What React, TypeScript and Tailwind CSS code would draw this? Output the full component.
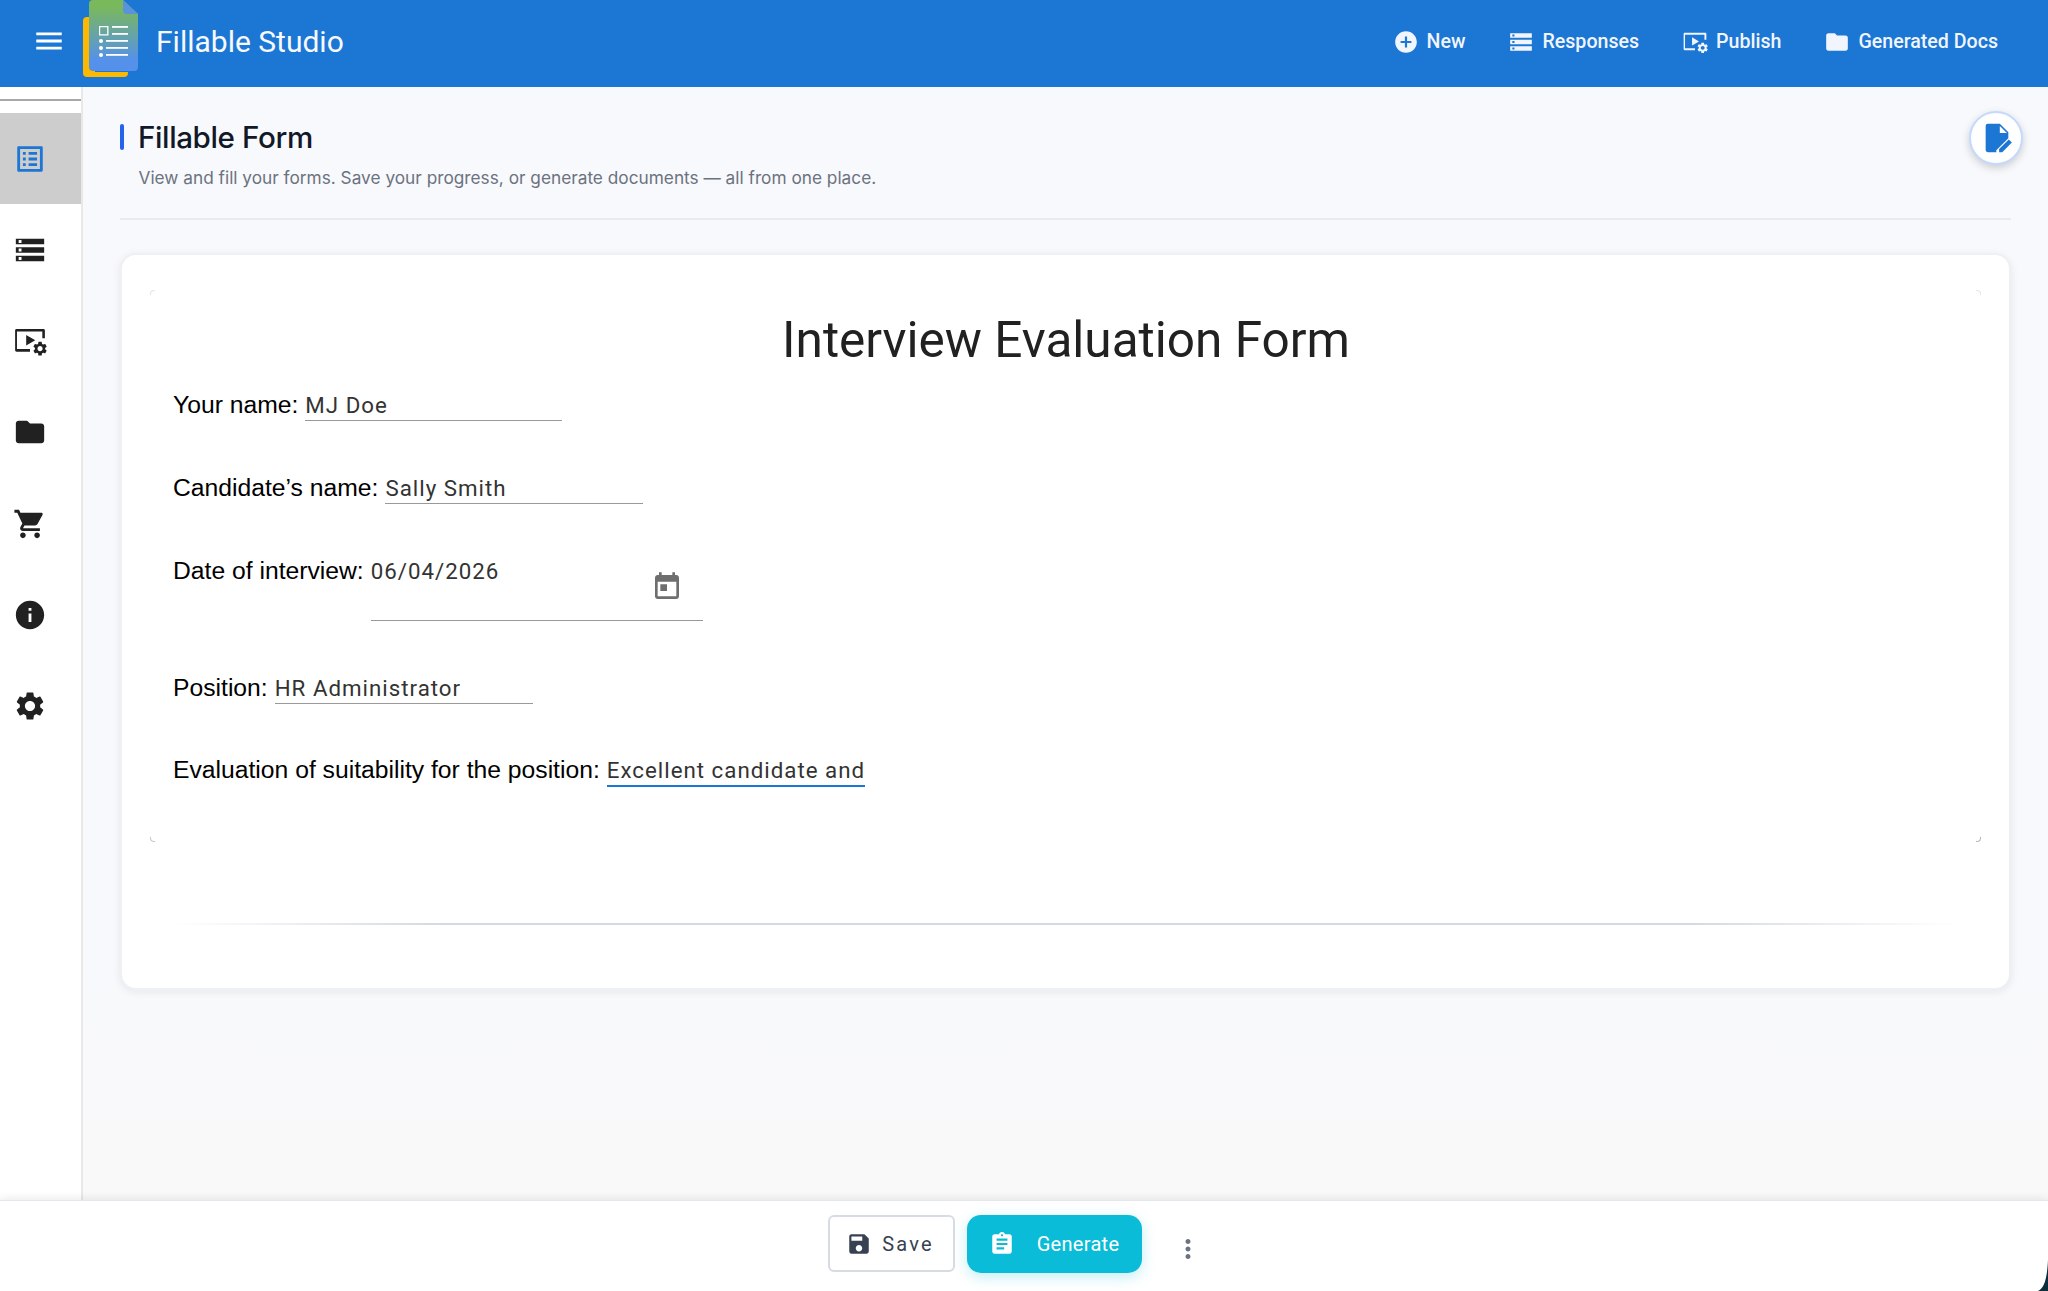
import type { ReactNode } from 'react';

const paths = {
	menu: 'M3 18h18v-2H3v2zm0-5h18v-2H3v2zm0-7v2h18V6H3z',
	listAlt:
		'M19 5v14H5V5h14m1.1-2H3.9c-.5 0-.9.4-.9.9v16.2c0 .4.4.9.9.9h16.2c.4 0 .9-.5.9-.9V3.9c0-.5-.5-.9-.9-.9zM11 7h6v2h-6V7zm0 4h6v2h-6v-2zm0 4h6v2h-6zM7 7h2v2H7zm0 4h2v2H7zm0 4h2v2H7z',
	storage:
		'M2 20h20v-4H2v4zm2-3h2v2H4v-2zM2 4v4h20V4H2zm4 3H4V5h2v2zm-4 7h20v-4H2v4zm2-3h2v2H4v-2z',
	folder:
		'M10 4H4c-1.1 0-1.99.9-1.99 2L2 18c0 1.1.9 2 2 2h16c1.1 0 2-.9 2-2V8c0-1.1-.9-2-2-2h-8l-2-2z',
	cart: 'M7 18c-1.1 0-1.99.9-1.99 2S5.9 22 7 22s2-.9 2-2-.9-2-2-2zM1 2v2h2l3.6 7.59-1.35 2.45c-.16.28-.25.61-.25.96 0 1.1.9 2 2 2h12v-2H7.42c-.14 0-.25-.11-.25-.25l.03-.12.9-1.63h7.45c.75 0 1.41-.41 1.75-1.03l3.58-6.49c.08-.14.12-.31.12-.48 0-.55-.45-1-1-1H5.21l-.94-2H1zm16 16c-1.1 0-1.99.9-1.99 2s.89 2 1.99 2 2-.9 2-2-.9-2-2-2z',
	info: 'M12 2C6.48 2 2 6.48 2 12s4.48 10 10 10 10-4.48 10-10S17.52 2 12 2zm1 15h-2v-6h2v6zm0-8h-2V7h2v2z',
	settings:
		'M19.14 12.94c.04-.3.06-.61.06-.94 0-.32-.02-.64-.07-.94l2.03-1.58c.18-.14.23-.41.12-.61l-1.92-3.32c-.12-.22-.37-.29-.59-.22l-2.39.96c-.5-.38-1.03-.7-1.62-.94l-.36-2.54c-.04-.24-.24-.41-.48-.41h-3.84c-.24 0-.43.17-.47.41l-.36 2.54c-.59.24-1.13.57-1.62.94l-2.39-.96c-.22-.08-.47 0-.59.22L2.74 8.87c-.12.21-.08.47.12.61l2.03 1.58c-.05.3-.09.63-.09.94s.02.64.07.94l-2.03 1.58c-.18.14-.23.41-.12.61l1.92 3.32c.12.22.37.29.59.22l2.39-.96c.5.38 1.03.7 1.62.94l.36 2.54c.05.24.24.41.48.41h3.84c.24 0 .44-.17.47-.41l.36-2.54c.59-.24 1.13-.56 1.62-.94l2.39.96c.22.08.47 0 .59-.22l1.92-3.32c.12-.22.07-.47-.12-.61l-2.01-1.58zM12 15.6c-1.98 0-3.6-1.62-3.6-3.6s1.62-3.6 3.6-3.6 3.6 1.62 3.6 3.6-1.62 3.6-3.6 3.6z',
	addCircle:
		'M12 2C6.48 2 2 6.48 2 12s4.48 10 10 10 10-4.48 10-10S17.52 2 12 2zm5 11h-4v4h-2v-4H7v-2h4V7h2v4h4v2z',
	save: 'M17 3H5c-1.11 0-2 .9-2 2v14c0 1.1.89 2 2 2h14c1.1 0 2-.9 2-2V7l-4-4zm-5 16c-1.66 0-3-1.34-3-3s1.34-3 3-3 3 1.34 3 3-1.34 3-3 3zm3-10H5V5h10v4z',
	assignment:
		'M19 3h-4.18C14.4 1.84 13.3 1 12 1c-1.3 0-2.4.84-2.82 2H5c-1.1 0-2 .9-2 2v14c0 1.1.9 2 2 2h14c1.1 0 2-.9 2-2V5c0-1.1-.9-2-2-2zm-7 0c.55 0 1 .45 1 1s-.45 1-1 1-1-.45-1-1 .45-1 1-1zm2 14H7v-2h7v2zm3-4H7v-2h10v2zm0-4H7V7h10v2z',
	today:
		'M19 3h-1V1h-2v2H8V1H6v2H5c-1.11 0-1.99.9-1.99 2L3 19c0 1.1.89 2 2 2h14c1.1 0 2-.9 2-2V5c0-1.1-.9-2-2-2zm0 16H5V8h14v11zM7 10h5v5H7z',
	dots: 'M12 8c1.1 0 2-.9 2-2s-.9-2-2-2-2 .9-2 2 .9 2 2 2zm0 2c-1.1 0-2 .9-2 2s.9 2 2 2 2-.9 2-2-.9-2-2-2zm0 6c-1.1 0-2 .9-2 2s.9 2 2 2 2-.9 2-2-.9-2-2-2z',
};

function Icon({ d, className }: { d: string; className?: string }) {
	return (
		<svg viewBox="0 0 24 24" fill="currentColor" className={className}>
			<path d={d} />
		</svg>
	);
}

// screen with play arrow and a small gear, not in the icon packs
function PublishIcon({ className }: { className?: string }) {
	return (
		<svg viewBox="0 0 24 24" fill="currentColor" className={className}>
			<path d="M2.500 3.500h19c.6 0 1 .4 1 1V10h-1.800V5.300H2.800v12.400H12v1.800H2.500c-.6 0-1-.4-1-1v-14c0-.6.4-1 1-1z" />
			<path d="M9.300 7.700v7.500l6.400-3.750z" />
			<g transform="translate(13.100 11.400) scale(0.5)">
				<path d={paths.settings} />
			</g>
		</svg>
	);
}

function Logo() {
	return (
		<svg viewBox="0 0 55 77" className="h-[77px] w-[55px] shrink-0">
			<defs>
				<linearGradient id="doc" x1="0" y1="0" x2="0" y2="1">
					<stop offset="0.1" stopColor="#7ab85c" />
					<stop offset="0.85" stopColor="#5591ea" />
				</linearGradient>
			</defs>
			<path d="M4 17h8v55h33v1a4 4 0 0 1-4 4H4a4 4 0 0 1-4-4V21a4 4 0 0 1 4-4z" fill="#fdb900" />
			<path d="M10 0h30l15 14v53a4 4 0 0 1-4 4H10a4 4 0 0 1-4-4V4a4 4 0 0 1 4-4z" fill="url(#doc)" />
			<path d="M40 0l15 14h-11a4 4 0 0 1-4-4z" fill="#5a93dc" />
			<g fill="#fff">
				<path d="M16 26h9.500v9.500H16zm1.200 1.200v7h7v-7z" fillRule="evenodd" />
				<rect x="29" y="26" width="16" height="1.800" />
				<rect x="29" y="33" width="16" height="1.800" />
				<rect x="23" y="40" width="22" height="1.800" />
				<rect x="23" y="47" width="22" height="1.800" />
				<rect x="23" y="54" width="22" height="1.800" />
				<circle cx="18" cy="41" r="2" />
				<circle cx="18" cy="48" r="2" />
				<circle cx="18" cy="55" r="2" />
			</g>
		</svg>
	);
}

function HeaderLink({ icon, label }: { icon: ReactNode; label: string }) {
	return (
		<div className="flex items-center gap-[8px] text-[19.600px] font-medium text-[#f1f5fd]">
			{icon}
			<span>{label}</span>
		</div>
	);
}

function FormRow({
	label,
	value,
	className,
	fieldClassName,
	children,
}: {
	label: string;
	value: string;
	className: string;
	fieldClassName: string;
	children?: ReactNode;
}) {
	return (
		<div className={`flex items-start ${className}`}>
			<span className="mr-[7px] mt-[2px] font-['Liberation_Sans',sans-serif] text-[24.700px] leading-[32px] text-[#000]">
				{label}
			</span>
			<div className={`relative pt-[3px] text-[22.300px] leading-[30px] tracking-[1px] text-[#333] ${fieldClassName}`}>
				{value}
				{children}
			</div>
		</div>
	);
}

const sideItems = [
	paths.storage,
	null,
	paths.folder,
	paths.cart,
	paths.info,
	paths.settings,
];

export default function App() {
	return (
		<div className="relative flex h-[1291px] w-[2048px] flex-col overflow-hidden bg-white font-['Roboto',sans-serif]">
			<header className="flex h-[87px] shrink-0 items-center bg-[#1c76d3] pb-[5px] pl-[32px] pr-[50px]">
				<Icon d={paths.menu} className="h-[34px] w-[34px] text-white" />
				<div className="ml-[17px] self-start">
					<Logo />
				</div>
				<span className="ml-[18px] text-[30px] font-normal text-[#f6f9fe]">Fillable Studio</span>
				<nav className="ml-auto mt-[2px] flex items-center gap-[43px]">
					<HeaderLink icon={<Icon d={paths.addCircle} className="h-[26px] w-[26px]" />} label="New" />
					<HeaderLink icon={<Icon d={paths.storage} className="h-[26px] w-[26px]" />} label="Responses" />
					<HeaderLink icon={<PublishIcon className="h-[26px] w-[26px]" />} label="Publish" />
					<HeaderLink icon={<Icon d={paths.folder} className="h-[26px] w-[26px]" />} label="Generated Docs" />
				</nav>
			</header>

			<div className="flex min-h-0 flex-1">
				<aside className="w-[83px] shrink-0 border-r-2 border-[#e8e8e8] bg-white pt-[12px]">
					<div className="h-[1.500px] bg-[#a8a8a8]" />
					<div className="mt-[12.500px] flex h-[91px] items-center justify-center bg-[#cdcdcd] pr-[22px]">
						<Icon d={paths.listAlt} className="h-[34px] w-[34px] text-[#1c76d3]" />
					</div>
					{sideItems.map((d, i) => (
						<div key={i} className="flex h-[91.300px] items-center justify-center pr-[22px] text-[#212121]">
							{d ? <Icon d={d} className="h-[34px] w-[34px]" /> : <PublishIcon className="h-[34px] w-[34px]" />}
						</div>
					))}
				</aside>

				<main className="min-w-0 flex-1 bg-[linear-gradient(#f8f9fc_78%,#f9f9f9)] px-[37px] pt-[32px]">
					<div className="h-[101px] border-b-2 border-[#e8eaee]">
						<div className="flex items-center">
							<div className="h-[26px] w-[4px] rounded-full bg-[#2563eb]" />
							<h1 className="ml-[14px] font-['Inter',sans-serif] text-[29.600px] font-medium leading-[36px] tracking-[-0.4px] text-[#111827]">
								Fillable Form
							</h1>
						</div>
						<p className="ml-[18.500px] mt-[11px] font-['Inter',sans-serif] text-[17.250px] leading-[24px] text-[#6b7280]">
							View and fill your forms. Save your progress, or generate documents — all from one place.
						</p>
					</div>

					<section className="relative mt-[33px] h-[737px] rounded-[16px] border-2 border-[#eef0f3] bg-white pl-[51px] pr-[50px] pt-[53px] shadow-[0_2px_8px_rgba(15,23,42,0.08)]">
						{/* leftover page corners of the embedded form */}
						<div className="absolute left-[28px] top-[35px] h-[5px] w-[5px] rounded-tl-[4px] border-l border-t border-[#e6e6e6]" />
						<div className="absolute right-[28px] top-[35px] h-[5px] w-[5px] rounded-tr-[4px] border-r border-t border-[#e6e6e6]" />
						<div className="absolute left-[28px] top-[582px] h-[5px] w-[5px] rounded-bl-[4px] border-b border-l border-[#c8c8c8]" />
						<div className="absolute right-[28px] top-[582px] h-[5px] w-[5px] rounded-br-[4px] border-b border-r border-[#b8b8b8]" />

						<h2 className="text-center text-[49.500px] leading-[64px] text-[#212121]">Interview Evaluation Form</h2>
						<div className="mt-[15px]">
							<FormRow
								label="Your name:"
								value="MJ Doe"
								className="h-[83px]"
								fieldClassName="h-[34px] w-[257px] border-b-[1.500px] border-[#999]"
							/>
							<FormRow
								label="Candidate’s name:"
								value="Sally Smith"
								className="h-[83px]"
								fieldClassName="h-[34px] w-[258px] border-b-[1.500px] border-[#999]"
							/>
							<FormRow
								label="Date of interview:"
								value="06/04/2026"
								className="h-[117px]"
								fieldClassName="h-[68px] w-[332px] border-b-[1.500px] border-[#999]"
							>
								<Icon d={paths.today} className="absolute right-[19.500px] top-[18px] h-[32px] w-[32px] text-[#6e6e6e]" />
							</FormRow>
							<FormRow
								label="Position:"
								value="HR Administrator"
								className="h-[82px]"
								fieldClassName="h-[34px] w-[258px] border-b-[1.500px] border-[#999]"
							/>
							<FormRow
								label="Evaluation of suitability for the position:"
								value="Excellent candidate and"
								className="h-[80px]"
								fieldClassName="h-[35px] w-[258px] whitespace-nowrap border-b-[2.500px] border-[#1c76d3]"
							/>
						</div>
						<div className="mt-[91px] h-[1.500px] bg-[linear-gradient(90deg,transparent,#d3dae3_15%,#d3dae3_85%,transparent)]" />
					</section>
				</main>
			</div>

			<footer className="flex h-[91px] shrink-0 items-center justify-center border-t border-[#e3e6ec] bg-white pb-[5px] shadow-[0_-2px_8px_rgba(0,0,0,0.08)]">
				<div className="flex items-center pr-[18px]">
					<button className="flex h-[57px] w-[127px] items-center justify-center gap-[10px] rounded-[6px] border-2 border-[#d7dbe3] pr-[2px] text-[20px] tracking-[2.200px] text-[#374151]">
						<Icon d={paths.save} className="h-[26px] w-[26px]" />
						Save
					</button>
					<button className="ml-[12px] flex h-[58px] w-[175px] items-center justify-center gap-[22px] rounded-[14px] bg-[#0abcd7] text-[20px] font-normal tracking-[0.300px] text-white shadow-[0_4px_14px_rgba(10,188,215,0.25)]">
						<Icon d={paths.assignment} className="h-[26px] w-[26px]" />
						Generate
					</button>
					<Icon d={paths.dots} className="ml-[31px] mt-[10px] h-[30px] w-[30px] text-[#6b7280]" />
				</div>
			</footer>

			{/* floating edit button */}
			<button className="absolute right-[25px] top-[111px] flex h-[54px] w-[54px] items-center justify-center rounded-full border-2 border-[#c3dafc] bg-white pl-[2px] shadow-[0_3px_8px_rgba(0,0,0,0.18)]">
				<svg viewBox="0 0 24 24" fill="#1c76d3" className="h-[34px] w-[34px]">
					<path d="M5.500 2H14l6 6v4.200l-8.500 8.500V22h-6a1.500 1.500 0 0 1-1.500-1.500v-17A1.500 1.500 0 0 1 5.500 2z" />
					<path d="M14 3.500V8.500h5z" fill="#fff" />
					<path d="M13.500 22v-2.200l6.800-6.800 2.200 2.200-6.800 6.800z" />
				</svg>
			</button>

			{/* dark corner of the window behind */}
			<svg viewBox="0 0 10 31" className="absolute bottom-0 right-0 h-[31px] w-[10px]">
				<path d="M10 0V31H0C6 28 9 20 10 0z" fill="#0d2c3c" />
			</svg>
		</div>
	);
}
